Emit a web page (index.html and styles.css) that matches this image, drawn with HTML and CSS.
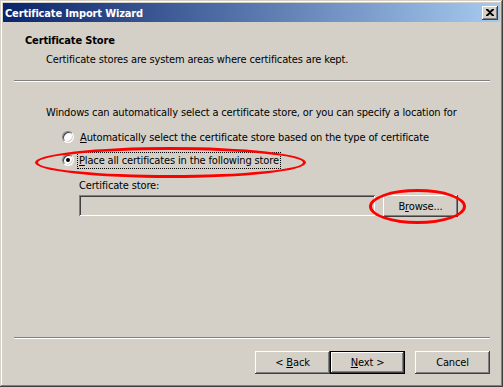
FILE: index.html
```html
<!DOCTYPE html>
<html lang="en">
<head>
  <meta charset="UTF-8">
  <title>Certificate Import Wizard</title>
  <link rel="stylesheet" href="styles.css">
</head>
<body>
  <div class="window">
    <div class="titlebar">
      <span class="title">Certificate Import Wizard</span>
      <span class="close-btn">
        <svg width="8" height="7" viewBox="0 0 8 7"><path d="M0 0h2l2 2 2-2h2v1L5 3.5 8 6v1H6L4 5 2 7H0V6l3-2.5L0 1z" fill="#000"/></svg>
      </span>
    </div>

    <div class="header">
      <h1>Certificate Store</h1>
      <p>Certificate stores are system areas where certificates are kept.</p>
    </div>
    <div class="sep"></div>

    <div class="content">
      <p class="intro">Windows can automatically select a certificate store, or you can specify a location for</p>
      <div class="option">
        <span class="radio"></span>
        <span class="label"><u>A</u>utomatically select the certificate store based on the type of certificate</span>
      </div>
      <div class="option">
        <span class="radio checked"></span>
        <span class="label focus"><u>P</u>lace all certificates in the following store</span>
      </div>
      <div class="store">
        <div class="store-label">Certificate store:</div>
        <div class="store-row">
          <div class="field"></div>
          <button class="btn">B<u>r</u>owse...</button>
        </div>
      </div>

      <div class="mark mark-place"></div>
      <div class="mark mark-browse"></div>
    </div>

    <div class="sep bottom"></div>
    <div class="buttons">
      <button class="btn">&lt; <u>B</u>ack</button>
      <button class="btn default"><u>N</u>ext &gt;</button>
      <button class="btn cancel">Cancel</button>
    </div>
  </div>
</body>
</html>
```

FILE: styles.css
```css
/* Windows 2000 style wizard */
html, body {
  margin: 0;
  padding: 0;
}
body {
  font-family: "DejaVu Sans", sans-serif;
  font-stretch: condensed;
  font-size: 11px;
  letter-spacing: -0.15px;
  color: #000;
  background: #d4d0c8;
}
.window {
  width: 503px;
  height: 387px;
  box-sizing: border-box;
  padding: 3px;
  display: flex;
  flex-direction: column;
  background: #d4d0c8;
  box-shadow: inset -1px -1px #404040, inset 1px 1px #d4d0c8,
              inset -2px -2px #808080, inset 2px 2px #fff;
}
.titlebar {
  height: 19px;
  display: flex;
  align-items: center;
  justify-content: space-between;
  padding: 0 2px 0 2px;
  background: linear-gradient(to right, #0a246a, #a6caf0);
}
.title {
  color: #fff;
  font-weight: bold;
  padding-top: 1px;
}
.close-btn {
  width: 16px;
  height: 14px;
  box-sizing: border-box;
  display: flex;
  align-items: center;
  justify-content: center;
  background: #d4d0c8;
  box-shadow: inset -1px -1px #404040, inset 1px 1px #fff, inset -2px -2px #808080;
}
.header {
  padding: 12px 0 0 22px;
  height: 58px;
  box-sizing: border-box;
}
.header h1 {
  font-size: 11px;
  font-weight: bold;
  margin: 0;
  line-height: 13px;
}
.header p {
  margin: 6px 0 0 21px;
  line-height: 13px;
}
.sep {
  margin: 0 10px 0 11px;
  border-top: 1px solid #808080;
  border-bottom: 1px solid #fff;
  height: 0;
}
.content {
  position: relative;
  flex: 1;
  padding: 24px 0 0 43px;
}
.intro {
  margin: 0;
  line-height: 13px;
}
.option {
  display: flex;
  align-items: center;
  height: 16px;
  margin-left: 16px;
}
.option:first-of-type {
  margin-top: 10px;
}
.option + .option {
  margin-top: 7px;
}
.radio {
  width: 12px;
  height: 12px;
  box-sizing: border-box;
  border-radius: 50%;
  background: #fff;
  border: 1px solid;
  border-color: #808080 #fff #fff #808080;
  box-shadow: inset 1px 1px #404040, inset -1px -1px #d4d0c8;
  display: flex;
  align-items: center;
  justify-content: center;
  margin-right: 4px;
}
.radio.checked::after {
  content: "";
  width: 4px;
  height: 4px;
  border-radius: 50%;
  background: #000;
}
.label {
  padding: 1px 1px;
  line-height: 13px;
  border: 1px solid transparent;
}
.label.focus {
  border: 1px dotted #000;
  margin-left: -1px;
}
.store {
  margin: 11px 0 0 33px;
}
.store-label {
  line-height: 13px;
}
.store-row {
  display: flex;
  margin-top: 3px;
}
.field {
  width: 296px;
  height: 21px;
  box-sizing: border-box;
  background: #d4d0c8;
  box-shadow: inset 1px 1px #808080, inset -1px -1px #fff,
              inset 2px 2px #404040, inset -2px -2px #d4d0c8;
}
.btn {
  width: 75px;
  height: 23px;
  padding: 0;
  font: inherit;
  letter-spacing: inherit;
  color: #000;
  background: #d4d0c8;
  border: none;
  box-shadow: inset -1px -1px #404040, inset 1px 1px #fff, inset -2px -2px #808080;
}
.store-row .btn {
  margin-left: 8px;
  height: 22px;
}
.btn.default {
  box-shadow: inset 0 0 0 1px #000, inset -2px -2px #404040, inset 2px 2px #fff, inset -3px -3px #808080;
}
.mark {
  position: absolute;
  border: 3px solid #f00;
  border-radius: 50%;
  box-sizing: border-box;
}
.mark-place {
  left: 32px;
  top: 65px;
  width: 271px;
  height: 31px;
}
.mark-browse {
  left: 366px;
  top: 107px;
  width: 97px;
  height: 35px;
}
.sep.bottom {
  margin-bottom: 12px;
}
.buttons {
  display: flex;
  justify-content: flex-end;
  padding: 0 10px 10px 0;
}
.buttons .cancel {
  margin-left: 10px;
}
```
